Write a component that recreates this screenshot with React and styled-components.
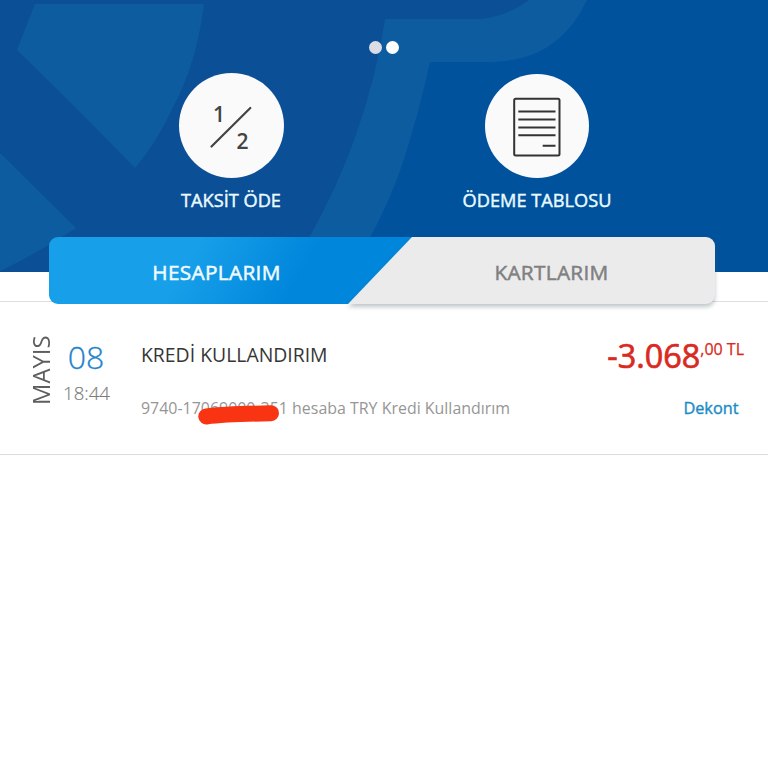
import React from 'react';
import styled, { createGlobalStyle } from 'styled-components';

const GlobalStyle = createGlobalStyle`
  * {
    box-sizing: border-box;
  }

  body {
    margin: 0;
    background: #fff;
    font-family: 'Open Sans', 'Noto Sans', sans-serif;
  }
`;

const Screen = styled.main`
  display: flex;
  flex-direction: column;
  width: 768px;
  min-height: 768px;
  overflow: hidden;
  background: #fff;
`;

const Header = styled.header`
  position: relative;
  display: flex;
  flex-direction: column;
  align-items: center;
  height: 272px;
  padding-top: 40px;
  background: #00529c;
`;

const Pattern = styled.svg`
  position: absolute;
  inset: 0;
  width: 100%;
  height: 100%;
`;

const Dots = styled.div`
  position: relative;
  display: flex;
  align-items: center;
  gap: 4px;
  height: 14px;
`;

const Dot = styled.span`
  width: 13px;
  height: 13px;
  border-radius: 50%;
  background: ${({ $active }) => ($active ? '#fff' : '#dcdce4')};
`;

const Actions = styled.div`
  position: relative;
  display: grid;
  grid-template-columns: repeat(2, 306px);
  align-items: end;
  margin-top: 19px;
`;

const Action = styled.button`
  display: flex;
  flex-direction: column;
  align-items: center;
  gap: 11px;
  padding: 0;
  border: 0;
  background: none;
  color: #e9fbff;
  font: 400 18.2px/23px 'Open Sans', 'Noto Sans', sans-serif;
  -webkit-text-stroke: 0.45px currentColor;
`;

const Circle = styled.span`
  display: flex;
  align-items: center;
  justify-content: center;
  width: ${({ $size }) => $size}px;
  height: ${({ $size }) => $size}px;
  border-radius: 50%;
  background: #fafafa;
  -webkit-text-stroke: 0;
`;

const Tabs = styled.nav`
  position: relative;
  display: grid;
  grid-template-columns: 1fr 1fr;
  height: 67px;
  margin: -35px 53px -3px 49px;
`;

const Tab = styled.button`
  position: relative;
  display: flex;
  align-items: center;
  justify-content: center;
  padding: 3px 0 0;
  border: 0;
  color: ${({ $active }) => ($active ? '#f1fbff' : '#808080')};
  background: ${({ $active }) =>
    $active ? 'linear-gradient(120deg, #189fe9 38%, #0086db 68%)' : 'none'};
  border-radius: 9px 0 0 9px;
  font: 400 20.8px/28px 'Open Sans', 'Noto Sans', sans-serif;
  letter-spacing: 0.3px;
  -webkit-text-stroke: 0.5px currentColor;
`;

const ActiveTab = styled(Tab)`
  margin-right: -30px;
  padding-right: 28px;
`;

/* slanted grey plate that cuts into the active tab */
const SlantShadow = styled.span`
  position: absolute;
  inset: 0 0 0 -34px;
  filter: drop-shadow(0 3px 2px rgba(60, 80, 90, 0.32));
`;

const Slant = styled.span`
  display: block;
  height: 100%;
  border-radius: 0 9px 9px 0;
  background: #ebebeb;
  clip-path: polygon(64px 0, 100% 0, 100% 100%, 0 100%);
`;

const PlateLabel = styled.span`
  position: relative;
  padding-left: 6px;
`;

const List = styled.section`
  border-top: 1px solid #dedede;
`;

const Row = styled.article`
  display: flex;
  height: 153px;
  border-bottom: 1px solid #dcdcdc;
`;

const Month = styled.div`
  width: 30px;
  height: 72px;
  margin: 31px 0 0 26px;
  color: #5e5e5e;
  font-size: 23.8px;
  line-height: 30px;
  writing-mode: vertical-rl;
  transform: rotate(180deg);
`;

const When = styled.div`
  display: flex;
  flex-direction: column;
  align-items: center;
  width: 61px;
  padding-top: 35px;
  font-weight: 300;
`;

const Day = styled.span`
  margin-right: 1px;
  color: #2583cb;
  font-size: 32px;
  line-height: 40px;
  -webkit-text-stroke: 0.3px currentColor;
`;

const Time = styled.span`
  margin-top: 2px;
  color: #7b7b7b;
  font-size: 18.6px;
  line-height: 28px;
  -webkit-text-stroke: 0.15px currentColor;
`;

const Details = styled.div`
  flex: 1;
  padding: 39px 0 0 24px;
`;

const Title = styled.h2`
  margin: 0;
  color: #363636;
  font-size: 19.4px;
  font-weight: 400;
  line-height: 28px;
`;

const Description = styled.p`
  position: relative;
  margin: 26px 0 0;
  color: #969696;
  font-size: 15.95px;
  line-height: 26px;
  white-space: nowrap;
`;

const Strike = styled.svg`
  position: absolute;
  left: 55px;
  top: 9px;
`;

const Side = styled.div`
  display: flex;
  flex-direction: column;
  align-items: flex-end;
  padding: 31px 24px 0 0;
`;

const Amount = styled.div`
  display: flex;
  color: #d92a22;
  font-size: 32.4px;
  line-height: 44px;
  -webkit-text-stroke: 0.7px currentColor;
`;

const Cents = styled.span`
  font-size: 16px;
  line-height: 32px;
  -webkit-text-stroke: 0.25px currentColor;
`;

const ReceiptLink = styled.a`
  margin: 18px 5.5px 0 0;
  color: #1b8cc6;
  font-size: 16.3px;
  line-height: 26px;
  -webkit-text-stroke: 0.4px currentColor;
`;

const IconText = styled.text`
  font: 600 21px 'Open Sans', 'Noto Sans', sans-serif;
`;

const HalfIcon = () => (
  <svg width="104" height="104" viewBox="0 0 104 104" fill="#444">
    <path d="M32.5 72.500 71.300 34" stroke="#444" strokeWidth="2.2" strokeLinecap="round" />
    <IconText x="34" y="47.500">1</IconText>
    <IconText x="57.500" y="75">2</IconText>
  </svg>
);

const PageIcon = () => (
  <svg width="104" height="104" viewBox="0 0 104 104" fill="none" stroke="#333" strokeWidth="2">
    <rect x="29.200" y="24.800" width="45.300" height="56.800" rx="1.500" />
    <path d="M33.300 37.400H70.500M33.300 45.400H70.500M33.300 53.400H70.500M33.300 61.200H70.500M57.700 71.800H70.500" />
  </svg>
);

const App = () => (
  <Screen>
    <GlobalStyle />
    <Header>
      <Pattern viewBox="0 0 768 272">
        <path fill="#0b4f96" d="M0 0H560V19H430L412 120L371 236L355 272H0Z" />
        <path fill="#0e5ca0" d="M35 4H204Q196 66 172 109Q157 142 135 168Q76 107 17 50Z" />
        <path fill="#0e5ca0" d="M0 153L76 228Q40 252 0 271Z" />
        <path
          fill="#0e5ca0"
          d="M385 19H480Q508 16 529 0H587Q558 62 490 62H430Q419 113 402 165Q390 200 371 236L350 272H288L310 236Q338 186 356 135Q377 75 385 19Z"
        />
      </Pattern>
      <Dots>
        <Dot />
        <Dot $active />
      </Dots>
      <Actions>
        <Action>
          <Circle $size={105}><HalfIcon /></Circle>
          TAKSİT ÖDE
        </Action>
        <Action>
          <Circle $size={104}><PageIcon /></Circle>
          ÖDEME TABLOSU
        </Action>
      </Actions>
    </Header>
    <Tabs>
      <ActiveTab $active>HESAPLARIM</ActiveTab>
      <Tab>
        <SlantShadow><Slant /></SlantShadow>
        <PlateLabel>KARTLARIM</PlateLabel>
      </Tab>
    </Tabs>
    <List>
      <Row>
        <Month>MAYIS</Month>
        <When>
          <Day>08</Day>
          <Time>18:44</Time>
        </When>
        <Details>
          <Title>KREDİ KULLANDIRIM</Title>
          <Description>
            9740-17069000-351 hesaba TRY Kredi Kullandırım
            <Strike width="86" height="26" viewBox="0 0 86 26" fill="none">
              <path d="M10.300 12.500Q30 10 75 9.300" stroke="#f93412" strokeWidth="16" strokeLinecap="round" />
            </Strike>
          </Description>
        </Details>
        <Side>
          <Amount>
            -3.068<Cents>,00 TL</Cents>
          </Amount>
          <ReceiptLink>Dekont</ReceiptLink>
        </Side>
      </Row>
    </List>
  </Screen>
);

export default App;
